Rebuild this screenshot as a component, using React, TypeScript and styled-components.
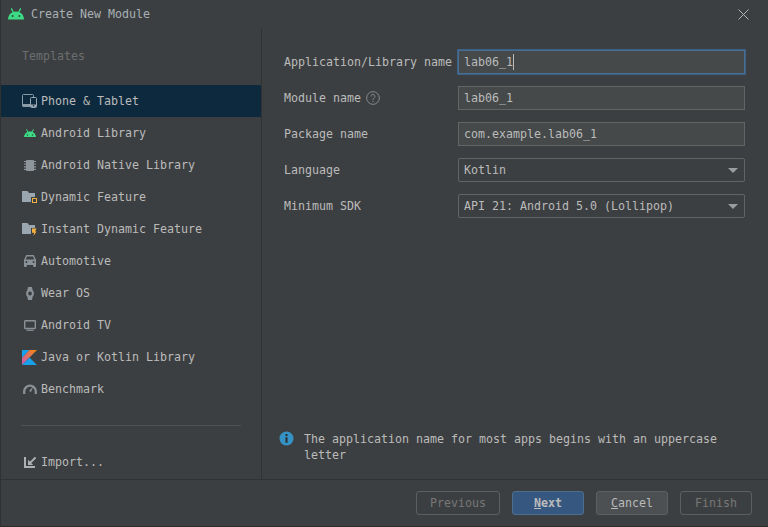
import React from "react"
import styled, { createGlobalStyle } from "styled-components"

const Global = createGlobalStyle`
  html, body {
    margin: 0;
    padding: 0;
    background: #3c3f41;
  }
  * {
    box-sizing: border-box;
  }
`

const Window = styled.div`
  width: 768px;
  height: 527px;
  display: flex;
  flex-direction: column;
  overflow: hidden;
  background: #3c3f41;
  color: #bbbbbb;
  border-left: 1px solid #2f3133;
  border-bottom: 1px solid #2b2b2b;
  font-family: "DejaVu Sans Mono", "Liberation Mono", monospace;
  font-size: 11.63px;
  line-height: 16px;
  white-space: pre;
`

const TitleBar = styled.div`
  height: 28px;
  flex: none;
  display: flex;
  align-items: center;
  padding: 0 19px 0 7px;
  gap: 7px;
`

const Title = styled.div`
  flex: 1;
  color: #a9b0b5;
`

const Body = styled.div`
  flex: 1;
  display: flex;
  min-height: 0;
`

const Sidebar = styled.div`
  width: 261px;
  flex: none;
  display: flex;
  flex-direction: column;
  border-right: 1px solid #323232;
`

const SidebarTitle = styled.div`
  height: 57px;
  padding: 20px 0 0 21px;
  color: #6b6e70;
`

const TemplateRow = styled.div<{ $selected?: boolean }>`
  height: 32px;
  display: flex;
  align-items: center;
  gap: 4px;
  padding-left: 21px;
  background: ${(p) => (p.$selected ? "#0d293e" : "transparent")};
`

const IconSlot = styled.span`
  width: 15px;
  height: 16px;
  display: flex;
  align-items: center;
  justify-content: center;
  flex: none;
`

const Divider = styled.div`
  height: 1px;
  margin: 20px 20px 0 20px;
  background: #515151;
`

const ImportRow = styled(TemplateRow)`
  margin-top: auto;
  margin-bottom: 1px;
`

const Main = styled.div`
  flex: 1;
  display: flex;
  flex-direction: column;
  padding: 22px 23px 16px 22px;
`

const Form = styled.div`
  display: grid;
  grid-template-columns: 174px 287px;
  grid-auto-rows: 24px;
  row-gap: 12px;
  align-items: center;
`

const Label = styled.div`
  display: flex;
  align-items: center;
  gap: 5px;
`

const Field = styled.div<{ $focused?: boolean }>`
  height: 24px;
  display: flex;
  align-items: center;
  padding-left: 5px;
  color: #bbbbbb;
  background: #45494a;
  border: 1px solid ${(p) => (p.$focused ? "#466d94" : "#646464")};
  box-shadow: ${(p) => (p.$focused ? "0 0 0 1px #3d6185" : "none")};
`

const Caret = styled.span`
  width: 1px;
  height: 16px;
  background: #bbbbbb;
`

const Select = styled.div`
  height: 24px;
  display: flex;
  align-items: center;
  justify-content: space-between;
  padding: 0 6px 0 5px;
  background: #3c3f41;
  border: 1px solid #646464;
  border-radius: 2px;
`

const Arrow = styled.span`
  width: 0;
  height: 0;
  margin-top: 1px;
  border-left: 5px solid transparent;
  border-right: 5px solid transparent;
  border-top: 5px solid #9a9d9f;
`

const Hint = styled.div`
  margin-top: auto;
  display: flex;
  align-items: flex-start;
  gap: 10px;
  margin-left: -5px;
  white-space: normal;
`

const HintText = styled.div`
  width: 430px;
`

const Footer = styled.div`
  height: 47px;
  flex: none;
  display: flex;
  align-items: center;
  justify-content: flex-end;
  gap: 12px;
  padding: 0 16px 0 0;
  border-top: 1px solid #323232;
`

const Button = styled.div<{ $kind: "primary" | "normal" | "disabled"; $wide?: boolean }>`
  width: ${(p) => (p.$wide ? "84px" : "72px")};
  height: 24px;
  display: flex;
  align-items: center;
  justify-content: center;
  border-radius: 3px;
  border: 1px solid ${(p) => (p.$kind === "primary" ? "#4c708c" : "#5e6060")};
  background: ${(p) =>
    p.$kind === "primary" ? "#365880" : p.$kind === "normal" ? "#4c5052" : "transparent"};
  color: ${(p) => (p.$kind === "disabled" ? "#777777" : "#bbbbbb")};
  font-weight: ${(p) => (p.$kind === "primary" ? 700 : 400)};
`

const Mnemonic = styled.span`
  text-decoration: underline;
`

const AndroidIcon = ({ size = 16 }: { size?: number }) => (
  <svg width={size} height={size * 0.72} viewBox="0 0 16 11.5">
    <path d="M0 11.5C.1 7 3 3.4 8 3.4s7.900 3.600 8 8.100Z" fill="#3ddc84" />
    <path d="M3.300.4 5.400 4.500M12.700.4 10.600 4.500" stroke="#3ddc84" strokeWidth="1.300" />
    <circle cx="4.700" cy="8" r="1" fill="#2f4a3f" />
    <circle cx="11.300" cy="8" r="1" fill="#2f4a3f" />
  </svg>
)

const PhoneIcon = () => (
  <svg width="15" height="14" viewBox="0 0 15 14" fill="none">
    <path d="M9 12.500H1.500a1 1 0 0 1-1-1V1.500a1 1 0 0 1 1-1h9a1 1 0 0 1 1 1V3" stroke="#8a9ba8" />
    <path d="M.5 10h8.500v3H1.500a1 1 0 0 1-1-1Z" fill="#8a9ba8" />
    <rect x="8.500" y="3.500" width="6" height="10" rx="1" fill="#0d293e" stroke="#9aa7b0" />
    <rect x="9" y="10.500" width="5" height="2.500" fill="#9aa7b0" />
    <circle cx="11.500" cy="11.700" r=".7" fill="#0d293e" />
  </svg>
)

const ChipIcon = () => (
  <svg width="12" height="11" viewBox="0 0 12 11">
    <rect x="2" y="0" width="8" height="11" rx="1" fill="#8f969b" />
    <path d="M0 1.500h12M0 4h12M0 6.800h12M0 9.400h12" stroke="#8f969b" strokeWidth="1.200" />
  </svg>
)

const FolderIcon = ({ bolt }: { bolt?: boolean }) => (
  <svg width="15" height="13" viewBox="0 0 15 13">
    <path d="M0 0h5.500l1.500 2h6v9H0Z" fill="#9aa7b0" />
    {bolt ? (
      <>
        <rect x="9" y="5" width="6" height="8" fill="#3c3f41" />
        <path d="M10 5.500h4.500l-1.300 3h1.300L11.500 13l.6-3.300H10Z" fill="#f4af3d" />
      </>
    ) : (
      <>
        <rect x="9" y="6" width="6" height="7" fill="#3c3f41" />
        <rect x="10.500" y="7.500" width="4" height="4" fill="none" stroke="#f4af3d" />
      </>
    )}
  </svg>
)

const CarIcon = () => (
  <svg width="12" height="12" viewBox="0 0 12 12">
    <path
      d="M2.200 0h7.600L12 5v6a1 1 0 0 1-1 1h-.8a1 1 0 0 1-1-1v-1H2.800v1a1 1 0 0 1-1 1H1a1 1 0 0 1-1-1V5Z"
      fill="#8a9197"
    />
    <path d="M3 1.500h6L10.200 4.600H1.800Z" fill="#3c3f41" />
    <circle cx="2.400" cy="7" r="1" fill="#3c3f41" />
    <circle cx="9.600" cy="7" r="1" fill="#3c3f41" />
  </svg>
)

const WatchIcon = () => (
  <svg width="8" height="13" viewBox="0 0 8 13" fill="none">
    <path d="M2 0h4l.6 3H1.400ZM1.400 10h5.200L6 13H2Z" fill="#8a9197" />
    <circle cx="4" cy="6.500" r="2.900" stroke="#8a9197" strokeWidth="2" />
  </svg>
)

const TvIcon = () => (
  <svg width="12" height="11" viewBox="0 0 12 11" fill="none">
    <rect x=".7" y=".7" width="10.600" height="7.800" rx=".6" stroke="#8a9197" strokeWidth="1.400" />
    <path d="M2.500 10.300h7" stroke="#8a9197" strokeWidth="1.200" />
  </svg>
)

const KotlinIcon = () => (
  <svg width="15" height="15" viewBox="0 0 14 14">
    <defs>
      <linearGradient id="kotlinA" x1="0" y1="1" x2="1" y2="0">
        <stop offset="0" stopColor="#c757bc" />
        <stop offset="1" stopColor="#f88909" />
      </linearGradient>
    </defs>
    <path d="M0 0h7L0 7.400Z" fill="#18a1e8" />
    <path d="M7 0h7L0 14V7.400Z" fill="url(#kotlinA)" />
    <path d="M0 14 7 7l7 7Z" fill="#18a1e8" />
  </svg>
)

const GaugeIcon = () => (
  <svg width="14" height="10" viewBox="0 0 14 10" fill="none">
    <path d="M1.200 10V7.500A5.800 5.800 0 0 1 12.800 7.500V10" stroke="#8a9197" strokeWidth="2.200" />
    <path d="M6 7 10.500 2 8 8Z" fill="#8a9197" />
  </svg>
)

const ImportIcon = () => (
  <svg width="12" height="12" viewBox="0 0 12 12" fill="none">
    <path d="M1 1v10h10" stroke="#aeb1b3" strokeWidth="2" />
    <path d="M11.500 1.500 5 8" stroke="#aeb1b3" strokeWidth="1.800" />
    <path d="M4 3.800V9h5.200Z" fill="#aeb1b3" />
  </svg>
)

const templates: { name: string; icon: React.ReactNode }[] = [
  { name: "Phone & Tablet", icon: <PhoneIcon /> },
  { name: "Android Library", icon: <AndroidIcon size={12} /> },
  { name: "Android Native Library", icon: <ChipIcon /> },
  { name: "Dynamic Feature", icon: <FolderIcon /> },
  { name: "Instant Dynamic Feature", icon: <FolderIcon bolt /> },
  { name: "Automotive", icon: <CarIcon /> },
  { name: "Wear OS", icon: <WatchIcon /> },
  { name: "Android TV", icon: <TvIcon /> },
  { name: "Java or Kotlin Library", icon: <KotlinIcon /> },
  { name: "Benchmark", icon: <GaugeIcon /> },
]

const App = () => {
  return (
    <Window>
      <Global />
      <TitleBar>
        <AndroidIcon />
        <Title>Create New Module</Title>
        <svg width="11" height="11" viewBox="0 0 11 11" fill="none">
          <path d="M.5.5l10 10M10.500.5l-10 10" stroke="#b0b3b5" />
        </svg>
      </TitleBar>
      <Body>
        <Sidebar>
          <SidebarTitle>Templates</SidebarTitle>
          {templates.map((t, i) => (
            <TemplateRow key={t.name} $selected={i === 0}>
              <IconSlot>{t.icon}</IconSlot>
              {t.name}
            </TemplateRow>
          ))}
          <Divider />
          <ImportRow>
            <IconSlot>
              <ImportIcon />
            </IconSlot>
            Import...
          </ImportRow>
        </Sidebar>
        <Main>
          <Form>
            <Label>Application/Library name</Label>
            <Field $focused>
              lab06_1
              <Caret />
            </Field>
            <Label>
              Module name
              <svg width="14" height="14" viewBox="0 0 15 15" fill="none">
                <circle cx="7.500" cy="7.500" r="6.800" stroke="#8c8f91" />
                <path
                  d="M5.400 5.800a2.100 2.100 0 1 1 3.200 1.800c-.8.5-1.100.9-1.100 1.800M7.500 10.600v1.200"
                  stroke="#8c8f91"
                />
              </svg>
            </Label>
            <Field>lab06_1</Field>
            <Label>Package name</Label>
            <Field>com.example.lab06_1</Field>
            <Label>Language</Label>
            <Select>
              Kotlin
              <Arrow />
            </Select>
            <Label>Minimum SDK</Label>
            <Select>
              API 21: Android 5.0 (Lollipop)
              <Arrow />
            </Select>
          </Form>
          <Hint>
            <svg width="15" height="15" viewBox="0 0 15 15">
              <circle cx="7.500" cy="7.500" r="7" fill="#3592c4" />
              <rect x="6.500" y="3" width="2" height="2" fill="#2b2d2e" />
              <rect x="6.500" y="6.200" width="2" height="5.600" fill="#2b2d2e" />
            </svg>
            <HintText>The application name for most apps begins with an uppercase letter</HintText>
          </Hint>
        </Main>
      </Body>
      <Footer>
        <Button $kind="disabled" $wide>
          Previous
        </Button>
        <Button $kind="primary">
          <span>
            <Mnemonic>N</Mnemonic>ext
          </span>
        </Button>
        <Button $kind="normal">
          <span>
            <Mnemonic>C</Mnemonic>ancel
          </span>
        </Button>
        <Button $kind="disabled">Finish</Button>
      </Footer>
    </Window>
  )
}

export default App
